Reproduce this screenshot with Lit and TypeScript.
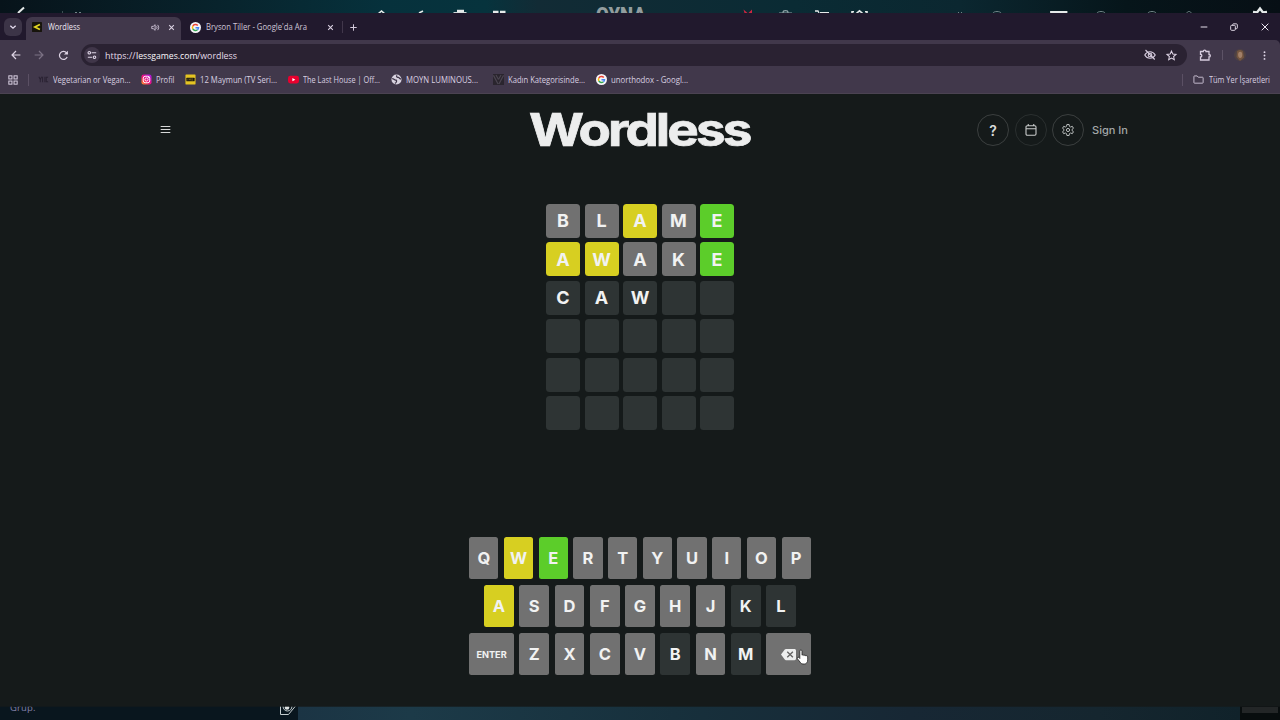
import { LitElement, html, css, svg } from "lit";
import { customElement, property } from "lit/decorators.js";
import { classMap } from "lit/directives/class-map.js";

/** A single line of text whose glyphs are condensed or stretched to fill a known width. */
@customElement("fit-text")
class FitText extends LitElement {
  @property({ type: Number }) width = 0;
  @property() text = "";
  static styles = css`
    :host { display: block; white-space: nowrap; flex: none; line-height: normal; }
    span { display: inline-block; transform-origin: 0 50%; }
  `;
  firstUpdated() {
    const span = this.renderRoot.querySelector("span") as HTMLElement;
    const natural = span.getBoundingClientRect().width;
    this.style.width = this.width + "px";
    span.style.transform = `scaleX(${this.width / natural})`;
    span.style.marginRight = this.width - natural + "px";
  }
  render() {
    return html`<span>${this.text}</span>`;
  }
}

const googleIcon = svg`
  <circle cx="12" cy="12" r="12" fill="#f6f4f8"/>
  <g fill="none" stroke-width="3.2">
    <path d="M17 7.6A6.6 6.6 0 0 0 6.2 8.8" stroke="#ea4335"/>
    <path d="M6.2 8.8a6.6 6.6 0 0 0 0 6.4" stroke="#fbbc05"/>
    <path d="M6.2 15.2a6.6 6.6 0 0 0 10 1.8" stroke="#34a853"/>
    <path d="M16.2 17a6.6 6.6 0 0 0 2.3-4.6H12" stroke="#4285f4"/>
  </g>`;

const icons: Record<string, unknown> = {
  google: googleIcon,
  vyc: svg`<g fill="none" stroke="#2a2233" stroke-width="2.2"><path d="M2 6l3 6 3-6M5 12v6M10 6v12M15 6v12M22 7h-4v10h4"/></g>`,
  insta: svg`<defs><linearGradient id="ig" x1="0" y1="1" x2="1" y2="0"><stop offset="0" stop-color="#ff9a1e"/><stop offset=".45" stop-color="#f0107a"/><stop offset="1" stop-color="#a51cf0"/></linearGradient></defs>
    <rect x="1" y="1" width="22" height="22" rx="5" fill="url(#ig)"/>
    <rect x="5" y="5" width="14" height="14" rx="4" fill="none" stroke="#fff" stroke-width="2"/>
    <circle cx="12" cy="12" r="3.4" fill="none" stroke="#fff" stroke-width="2"/><circle cx="16.2" cy="7.8" r="1.1" fill="#fff"/>`,
  imdb: svg`<rect x="1" y="1" width="22" height="22" rx="1" fill="#e5c422"/><rect x="3" y="8" width="18" height="8" rx="1" fill="#1b1810"/><path d="M6 10v4M9 14v-4l1.5 3 1.5-3v4M14.5 10v4h2v-4z" stroke="#8a771c" fill="none"/>`,
  youtube: svg`<rect x="0" y="4" width="24" height="16.5" rx="5" fill="#e8002e"/><path d="M9.5 8.5v7.5l6.5-3.7z" fill="#fff"/>`,
  globe: svg`<circle cx="12" cy="12" r="11" fill="#d8d2df"/><path d="M2.500 10c4.500 0 5 3.500 9 3.500 1.500 2 .5 5.500-3 7" stroke="#3d3448" stroke-width="2.800" fill="none"/><path d="M13 3c-2.500 3 1 4.500 3.500 4.500 1.500 0 1 3.500 5.500 3.500" stroke="#3d3448" stroke-width="2.800" fill="none"/>`,
  vmark: svg`<rect x="0" y="0" width="24" height="24" fill="#2a252e"/><path d="M1 3l10 19M6.500 2l5.500 10M23 3l-10 19M17.500 2L12 12" stroke="#4c4651" stroke-width="2.5"/>`,
  apps: svg`<g fill="none" stroke="#d9cfe2" stroke-width="2.4"><rect x="2" y="2" width="7.5" height="7.5"/><rect x="14.5" y="2" width="7.5" height="7.5"/><rect x="2" y="14.5" width="7.5" height="7.5"/><rect x="14.5" y="14.5" width="7.5" height="7.5"/></g>`,
  folder: svg`<path d="M2 5.500c0-.8.5-1.300 1.300-1.300H9l2.500 2.800h9.300c.8 0 1.300.5 1.300 1.300v10.400c0 .8-.5 1.300-1.300 1.300H3.300c-.8 0-1.300-.5-1.300-1.300z" fill="none" stroke="#cfc5d8" stroke-width="2"/>`,
  less: svg`<rect width="24" height="24" rx="2" fill="#17140c"/><path d="M19 6L7 12l12 6" fill="none" stroke="#e4d722" stroke-width="4.2"/>`,
  sound: svg`<path d="M2 9h4l5-4.500v15L6 15H2z" fill="none" stroke="#cfc5d8" stroke-width="2.400"/><path d="M14.500 8.500c2 2 2 5 0 7M17.500 5c4 4 4 10 0 14" fill="none" stroke="#cfc5d8" stroke-width="2.400"/>`,
  close: svg`<path d="M4 4l16 16M20 4L4 20" stroke="#ddd4e5" stroke-width="3.600" fill="none"/>`,
  closeThin: svg`<path d="M2 2l20 20M22 2L2 22" stroke="#ece6f0" stroke-width="3" fill="none"/>`,
  plus: svg`<path d="M12 1v22M1 12h22" stroke="#d5cbdd" stroke-width="3.400" fill="none"/>`,
  chevron: svg`<path d="M4 8l8 7.500 8-7.500" stroke="#e6def0" stroke-width="3.800" fill="none"/>`,
  back: svg`<path d="M22.500 12H3M12 2.500L2.500 12l9.500 9.500" stroke="#ddd3e4" stroke-width="2.900" fill="none"/>`,
  forward: svg`<path d="M1.500 12H21M12 2.500l9.500 9.500-9.500 9.500" stroke="#7c7285" stroke-width="2.900" fill="none"/>`,
  reload: svg`<path d="M20 15.500A8.800 8.800 0 1 1 18.600 6l2.400 2.500" stroke="#ddd3e4" stroke-width="2.700" fill="none"/><path d="M21.500 1.500v8.500h-8.500z" fill="#ddd3e4"/>`,
  tune: svg`<g fill="none" stroke="#e0d7e8" stroke-width="2.600"><circle cx="5.500" cy="6.500" r="3"/><path d="M11 6.500h11M2 17.500h10"/><circle cx="18" cy="17.500" r="3"/></g>`,
  eyeOff: svg`<g fill="none" stroke="#d6ccde" stroke-width="2.200"><path d="M1.500 12C4 7.500 8 5.500 12 5.500s8 2 10.500 6.500c-2.500 4.500-6.500 6.500-10.500 6.500S4 16.500 1.500 12z"/><circle cx="12" cy="12" r="3.600"/><path d="M3 2l18.500 19"/></g>`,
  star: svg`<path d="M12 2.500l2.900 6.400 6.900.7-5.200 4.700 1.500 6.900-6.100-3.600-6.100 3.600 1.500-6.900-5.200-4.700 6.900-.7z" fill="none" stroke="#ddd3e4" stroke-width="2.300"/>`,
  puzzle: svg`<path d="M3 5h5.500c0-3.800 5.500-3.800 5.500 0h6v6c3.600 0 3.600 5 0 5v6H3v-6c3.500 0 3.500-5.500 0-5.500z" fill="none" stroke="#d6ccde" stroke-width="2.600"/>`,
  dots: svg`<g fill="#e0d7e8"><circle cx="12" cy="3" r="2.500"/><circle cx="12" cy="12" r="2.500"/><circle cx="12" cy="21" r="2.500"/></g>`,
  minimize: svg`<path d="M2 12h20" stroke="#e6dfec" stroke-width="3"/>`,
  restore: svg`<g fill="none" stroke="#e6dfec" stroke-width="2.800"><rect x="2" y="7" width="14" height="15" rx="3"/><path d="M8 7V5c0-1 .8-2.500 2-2.500h9c1.500 0 3 1 3 2.500v9.500c0 1.500-1 2.500-2.500 2.500H16"/></g>`,
  menu: svg`<path d="M1.500 5.500h21M1.500 12h21M1.500 18.500h21" stroke="#d6d8d8" stroke-width="2.400"/>`,
  calendar: svg`<g fill="none" stroke="#c9cbcb" stroke-width="2.200"><rect x="2" y="3.500" width="20" height="19" rx="2.500"/><path d="M2 9.500h20M6.500 0v4M17.500 0v4"/></g>`,
  gear: svg`<g fill="none" stroke="#b9bdbd" stroke-width="2" stroke-linejoin="round"><path d="M9.800 1h4.400l.7 3.700 2.200 1.300 3.600-1.300 2.200 3.900-2.900 2.300v2.200l2.900 2.300-2.200 3.900-3.600-1.300-2.200 1.300-.7 3.700H9.800l-.7-3.700L6.900 18l-3.600 1.300-2.200-3.900L4 13.100v-2.200L1.100 8.600l2.200-3.900L6.900 6l2.200-1.300z"/><circle cx="12" cy="12" r="3.200"/></g>`,
  backspace: svg`<path d="M8 3h13.500c1.400 0 2.500 1 2.500 2.500v13c0 1.500-1.100 2.500-2.500 2.500H8c-.8 0-1.500-.3-2-1L0 12l6-8c.5-.7 1.200-1 2-1z" fill="#eeefef"/><path d="M10 7.500l9 9M19 7.500l-9 9" stroke="#646464" stroke-width="2.100"/>`,
};

const icon = (name: string, cls = "i12") =>
  html`<svg class="icon ${cls}" viewBox="0 0 24 24">${icons[name]}</svg>`;

const bookmarks = [
  { icon: "vyc", label: "Vegetarian or Vegan...", text: 77.5, slot: 103 },
  { icon: "insta", label: "Profil", text: 18.5, slot: 44 },
  { icon: "imdb", label: "12 Maymun (TV Seri...", text: 77, slot: 103 },
  { icon: "youtube", label: "The Last House | Off...", text: 77, slot: 102.5 },
  { icon: "globe", label: "MOYN LUMINOUS...", text: 72, slot: 102 },
  { icon: "vmark", label: "Kadın Kategorisinde...", text: 77, slot: 103 },
  { icon: "google", label: "unorthodox - Googl...", text: 77, slot: 103 },
];

// x = absent, p = present, c = correct, e = empty / unused
const board: [string, string][] = [
  ["BLAME", "xxpxc"],
  ["AWAKE", "ppxxc"],
  ["CAW  ", "eeeee"],
  ["     ", "eeeee"],
  ["     ", "eeeee"],
  ["     ", "eeeee"],
];
const keys: [string, string][] = [
  ["QWERTYUIOP", "xpcxxxxxxx"],
  ["ASDFGHJKL", "pxxxxxxee"],
  [">ZXCVBNM<", "xxxxxexex"],
];
const tone = (t: string) => ({ absent: t === "x", present: t === "p", correct: t === "c" });

@customElement("app-root")
class AppRoot extends LitElement {
  static styles = css`
    :host {
      display: flex; flex-direction: column; width: 1280px; height: 720px; overflow: hidden;
      font-family: "Open Sans", "Noto Sans", sans-serif; background: #151a1a; position: relative;
    }
    * { box-sizing: border-box; }
    .icon { display: block; flex: none; overflow: visible; }
    .i7 { width: 7px; height: 7px; } .i8 { width: 8px; height: 8px; }
    .i9 { width: 9px; height: 9px; } .i10 { width: 10px; height: 10px; }
    .i11 { width: 11px; height: 11px; } .i12 { width: 12px; height: 12px; }
    .i15 { width: 15px; height: 15px; }
    .strip { display: block; flex: none; width: 1280px; }
    .top { height: 13px; } .bottom { height: 14px; }
    .tabs { height: 27px; flex: none; background: #21192d; display: flex; align-items: flex-end; padding-left: 4px; color: #cfc6d7; }
    .search { width: 18px; height: 18px; border-radius: 6px; background: #3c3447; display: grid; place-items: center; margin: 0 4px 4px 0; }
    .tab { height: 23px; display: flex; align-items: center; padding-bottom: 3px; font-size: 8.6px; }
    .active { width: 155px; background: #41384b; border-radius: 6px 6px 0 0; padding-left: 6px; color: #eee8f2; }
    .active fit-text { margin: 0 71px 0 6px; }
    .active .i9 { margin-right: 7.5px; }
    .other { width: 161px; padding-left: 9px; }
    .other fit-text { margin: 0 19.5px 0 5px; }
    .plus { height: 23px; padding-bottom: 3px; display: flex; align-items: center; gap: 7px; }
    .rule { width: 1px; height: 12px; background: #41374b; flex: none; }
    .controls { margin-left: auto; height: 27px; display: flex; align-items: center; gap: 22.5px; padding-right: 11.5px; }
    .toolbar { height: 30px; flex: none; background: #41384b; display: flex; align-items: center; padding-left: 10.5px; border-top-right-radius: 5px; }
    .toolwrap { background: #21192d; flex: none; }
    .nav { display: flex; gap: 13.5px; align-items: center; width: 70.5px; }
    .url { height: 22px; width: 1106px; border-radius: 11px; background: #2a2232; display: flex; align-items: center; padding: 0 10px 0 3px; color: #e4dbe9; font-size: 9.7px; }
    .site { width: 16px; height: 16px; border-radius: 50%; background: #403649; display: grid; place-items: center; margin-right: 5px; }
    .host { color: #fbf7fc; }
    .grow { flex: 1; }
    .url .star { margin-left: 10px; }
    .ext { display: flex; align-items: center; padding-left: 12px; }
    .avatar { width: 12px; height: 12px; margin: 0 14px 0 11px; }
    .ext .rule { margin-left: 11px; background: #5d5366; height: 10px; }
    .marks { height: 24px; flex: none; background: #41384b; border-bottom: 1px solid #4b4352; display: flex; align-items: center; padding: 0 10px 4px 8px; color: #d8cfe0; font-size: 8.4px; }
    .marks > .rule { background: #5b5064; margin: 0 9px 0 10px; }
    .mark { display: flex; align-items: center; gap: 4px; flex: none; }
    .marks .all { margin: 0 10px 0 0; }
    .marks fit-text.last { margin-left: 5px; }
    .page { flex: 1; background: #151a1a; display: flex; flex-direction: column; align-items: center; min-height: 0; font-family: Inter, sans-serif; color: #f1f2f2; }
    .head { width: 976px; height: 72px; display: grid; grid-template-columns: 1fr auto 1fr; align-items: center; }
    .menu { padding: 0 0 0.5px 8px; }
    .logo { font-size: 45px; font-weight: 700; line-height: 72px; letter-spacing: -0.055em; margin: 0 2.5px 0 0; color: #eceded; -webkit-text-stroke: 0.7px #eceded; }
    .actions { display: flex; justify-content: flex-end; align-items: center; gap: 5.5px; }
    .round { width: 32px; height: 32px; border: 1px solid #3b3f3f; border-radius: 50%; display: grid; place-items: center; font-size: 14px; font-weight: 600; color: #d8dada; }
    .dim { border-color: #2a2f2f; }
    .sign { font-size: 11px; font-weight: 500; color: #a3a7a7; margin: 0 0 1px 2.5px; }
    .board { display: grid; grid-template-columns: repeat(5, 34px); gap: 4.45px 4.5px; margin-top: 38px; }
    .cell { height: 34px; border-radius: 3.5px; background: #2e3434; display: grid; place-items: center; font-size: 18px; font-weight: 700; line-height: 1; padding-top: 0.6px; }
    .keyboard { width: 341.5px; display: flex; flex-direction: column; gap: 5.5px; margin-top: 106.5px; }
    .row { display: flex; gap: 5.5px; height: 42.5px; }
    .inset { padding: 0 14.9px; }
    .key { flex: 1 1 0; min-width: 0; border-radius: 2.5px; background: #2e3434; display: flex; align-items: center; justify-content: center; font-size: 16.5px; font-weight: 700; line-height: 1; padding-top: 1.2px; }
    .wide { flex-grow: 1.5; font-size: 9.2px; padding-top: 0.4px; }
    .absent { background: #717171; }
    .present { background: #d7cf21; }
    .correct { background: #5ccd2a; }
    .cursor { position: absolute; left: 795.5px; top: 649px; width: 13px; height: 16px; }
  `;

  topStrip() {
    return html`<svg class="strip top" viewBox="0 0 1280 13">
      <defs><linearGradient id="sky"><stop offset="0" stop-color="#07131a"/><stop offset=".18" stop-color="#08242d"/><stop offset=".3" stop-color="#06313c"/><stop offset=".38" stop-color="#06333d"/><stop offset=".42" stop-color="#122b35"/><stop offset=".62" stop-color="#0a2b34"/><stop offset=".75" stop-color="#0b2730"/><stop offset=".88" stop-color="#06151a"/><stop offset="1" stop-color="#070f15"/></linearGradient></defs>
      <rect width="1280" height="13" fill="url(#sky)"/>
      <g fill="none" stroke="#e6eaea" stroke-width="1.6">
        <path d="M18 13l6-5.500" stroke-width="2"/>
        <path d="M378.500 13.500l3-2.500 3 2.500M419 13l4-2"/>
        <path d="M457 11h7" stroke-width="2.500"/><path d="M453.500 12.600h13" stroke-width="1"/>
        <path d="M493 12h5.500M500 12h5.500" stroke-width="2.500"/>
        <path d="M779 13h13M783 12.500c0-2.500 5-2.500 5 0" stroke="#8fa2a6" stroke-width="1.200"/>
        <path d="M815 11h3l1 2M820 12.700h9" stroke-width="1.300"/><path d="M852 13v-1.300h2M856.500 13.300l3-2.500 3 2.500M867 13v-1.300h-2"/>
        <path d="M1051 13v-1h15.500v1" stroke-width="1.800"/>
        <path d="M1253 12l4 .5 3-4 3 4 4-.5" stroke-width="2.400"/>
      </g>
      <path d="M743.500 9.500l4 3.500h1l3.500-3.500v3.500h-7.500z" fill="#cf2541"/>
      <g fill="none" stroke="#718387" stroke-width="1"><path d="M993 13c1-2 7-2 8 0M1097 13c1-2 7-2 8 0M1148 13c1-2 7-2 8 0M1187 13c0-2 4-2 4 0M958 12.500h1M961 12.500h1M62 12h1M75 12.500h2M79 12.500h2"/></g>
      <text x="596" y="21.500" font-family="Roboto" font-weight="900" font-size="20" textLength="50" lengthAdjust="spacingAndGlyphs" fill="#939d9f">OYNA</text>
    </svg>`;
  }

  bottomStrip() {
    return html`<svg class="strip bottom" viewBox="0 0 1280 14">
      <defs><linearGradient id="sea"><stop offset="0" stop-color="#1b3444"/><stop offset=".12" stop-color="#1c3a48"/><stop offset=".4" stop-color="#17303c"/><stop offset=".65" stop-color="#172734"/><stop offset=".85" stop-color="#15262f"/><stop offset="1" stop-color="#10222a"/></linearGradient></defs>
      <rect width="1280" height="14" fill="#09161e"/>
      <rect x="298" width="942" height="14" fill="url(#sea)"/>
      <rect x="1240" width="40" height="14" fill="#080d0e"/><rect x="1242" y="1" width="36" height="6" fill="#232627"/>
      <text x="10" y="4.5" font-family="Open Sans" font-size="9.5" textLength="25.5" fill="#8380a8">Grup.</text>
      <g fill="none" stroke="#c4cccd"><path d="M280.500 0v8.500h8l7-8.500"/><path d="M283 0c0 3 2 5 4.500 5s4.500-2 4.500-5"/></g><circle cx="287" cy="1.500" r="2.300" fill="#dde2e2"/>
      <rect width="1280" height="1" fill="#151a1a" opacity=".7"/>
    </svg>`;
  }

  render() {
    return html`
      ${this.topStrip()}
      <div class="tabs">
        <div class="search">${icon("chevron", "i8")}</div>
        <div class="tab active">${icon("less", "i10")}<fit-text text="Wordless" .width=${32}></fit-text>${icon("sound", "i9")}${icon("close", "i7")}</div>
        <div class="tab other">${icon("google", "i11")}<fit-text text="Bryson Tiller - Google'da Ara" .width=${101}></fit-text>${icon("close", "i7")}</div>
        <div class="plus"><div class="rule"></div>${icon("plus", "i7")}</div>
        <div class="controls">${icon("minimize", "i8")}${icon("restore", "i8")}${icon("closeThin", "i8")}</div>
      </div>
      <div class="toolwrap"><div class="toolbar">
        <div class="nav">${icon("back", "i10")}${icon("forward", "i10")}${icon("reload", "i11")}</div>
        <div class="url">
          <div class="site">${icon("tune", "i10")}</div>
          <fit-text text="https://" .width=${30.5}></fit-text><fit-text class="host" text="lessgames.com" .width=${61.5}></fit-text><fit-text text="/wordless" .width=${40}></fit-text>
          <div class="grow"></div>
          ${icon("eyeOff", "i12")}<div class="star">${icon("star", "i11")}</div>
        </div>
        <div class="ext">${icon("puzzle", "i12")}<div class="rule"></div>
          <svg class="avatar" viewBox="0 0 12 12"><circle cx="6" cy="6" r="6" fill="#4d4144"/><path d="M3 2.500c1-2 5-2 6 0l1 6-4 3.500L2.500 8z" fill="#74553f"/><ellipse cx="6.200" cy="5.800" rx="2.100" ry="3.100" fill="#a28068"/></svg>
          ${icon("dots", "i9")}</div>
      </div></div>
      <div class="marks">
        ${icon("apps", "i10")}<div class="rule"></div>
        ${bookmarks.map((b) => html`<div class="mark" style="width:${b.slot}px">${icon(b.icon, "i11")}<fit-text .text=${b.label} .width=${b.text}></fit-text></div>`)}
        <div class="grow"></div><div class="rule all"></div>${icon("folder", "i11")}<fit-text class="last" text="Tüm Yer İşaretleri" .width=${61}></fit-text>
      </div>
      <div class="page">
        <div class="head">
          <div class="menu">${icon("menu", "i11")}</div>
          <fit-text class="logo" text="Wordless" .width=${220.5}></fit-text>
          <div class="actions">
            <div class="round">?</div><div class="round dim">${icon("calendar", "i12")}</div><div class="round">${icon("gear", "i12")}</div>
            <fit-text class="sign" text="Sign In" .width=${36}></fit-text>
          </div>
        </div>
        <div class="board">
          ${board.map(([w, t]) => [...w].map((c, i) => html`<div class=${classMap({ cell: true, ...tone(t[i]) })}>${c.trim()}</div>`))}
        </div>
        <div class="keyboard">
          ${keys.map(([row, t], r) => html`<div class=${classMap({ row: true, inset: r === 1 })}>
            ${[...row].map((c, i) => html`<div class=${classMap({ key: true, wide: c === ">" || c === "<", ...tone(t[i]) })}>${c === ">" ? "ENTER" : c === "<" ? icon("backspace", "i15") : c}</div>`)}
          </div>`)}
        </div>
      </div>
      ${this.bottomStrip()}
      <svg class="cursor" viewBox="0 0 13 16"><path d="M3.800 2.200c0-1.600 2.200-1.600 2.200 0v4c.3-.6 1.800-.5 1.900.3.500-.6 1.700-.4 1.900.4.600-.5 1.900-.2 1.900 1v3c0 2.300-1.200 4.100-3.300 4.100H7c-1.500 0-2.300-.8-3-2L1.400 9.800c-.7-1.200.7-2.200 1.600-1.200l.8.900z" fill="#fff" stroke="#222" stroke-width=".8"/></svg>
    `;
  }
}
